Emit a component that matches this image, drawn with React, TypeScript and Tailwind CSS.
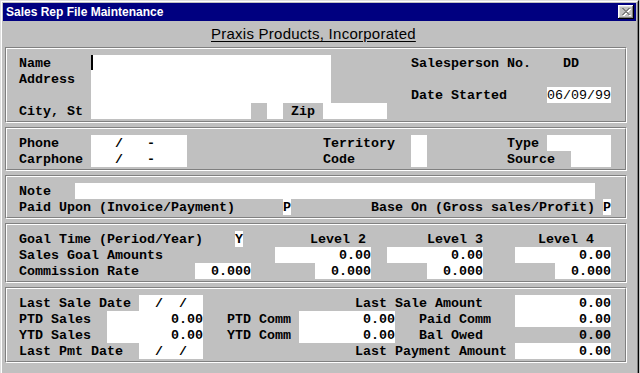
import React from "react";

type SP = { c: string; t?: string; white?: boolean; right?: boolean; normal?: boolean; children?: React.ReactNode };

function S({ c, t, white, right, normal, children }: SP) {
  return (
    <div
      className={`${c} shrink-0 h-4 leading-[18px] whitespace-pre ${white ? "bg-white" : ""} ${right ? "text-right" : ""} ${normal ? "font-normal" : ""}`}
    >
      {t}
      {children}
    </div>
  );
}

function Row({ children }: { children: React.ReactNode }) {
  return <div className="flex h-4">{children}</div>;
}

function Panel({ children, first }: { children: React.ReactNode; first?: boolean }) {
  return (
    <div
      className={`ml-[2px] w-[622px] border border-[#808080] border-r-white border-b-white ${first ? "" : "mt-[4px]"}`}
    >
      <div className="border border-white border-r-[#808080] border-b-[#808080] pl-[12px] pt-[6px] pb-[2px]">
        {children}
      </div>
    </div>
  );
}

function CloseX() {
  const px = [
    [0, 0], [1, 0], [6, 0], [7, 0],
    [1, 1], [2, 1], [5, 1], [6, 1],
    [2, 2], [3, 2], [4, 2], [5, 2],
    [3, 3], [4, 3],
    [2, 4], [3, 4], [4, 4], [5, 4],
    [1, 5], [2, 5], [5, 5], [6, 5],
    [0, 6], [1, 6], [6, 6], [7, 6],
  ];
  return (
    <svg width="9" height="8" viewBox="0 0 9 8" shapeRendering="crispEdges">
      {px.map(([x, y], i) => (
        <rect key={"w" + i} x={x + 1} y={y + 1} width="1" height="1" fill="#ffffff" />
      ))}
      {px.map(([x, y], i) => (
        <rect key={"g" + i} x={x} y={y} width="1" height="1" fill="#808080" />
      ))}
    </svg>
  );
}

export default function App() {
  return (
    <div className="w-[640px] h-[373px] bg-[#c0c0c0] overflow-hidden">
      <div className="w-[639px] h-[400px] border border-[#dfdfdf] border-r-black border-b-black">
        <div className="h-full border border-white border-r-[#808080] border-b-[#808080] p-px">
          {/* Title bar */}
          <div className="h-[18px] bg-[#000080] flex items-center pl-[3px] pr-[2px]">
            <span className="font-['Liberation_Sans',Arial,sans-serif] font-bold text-[12px] leading-[18px] text-white">
              Sales Rep File Maintenance
            </span>
            <div className="ml-auto w-[16px] h-[14px] bg-[#c0c0c0] flex items-center justify-center pl-[1px] shadow-[inset_-1px_-1px_0_#000,inset_1px_1px_0_#fff,inset_-2px_-2px_0_#808080,inset_2px_2px_0_#dfdfdf]">
              <CloseX />
            </div>
          </div>
          {/* Header */}
          <div className="h-[26px] pl-[208px]">
            <span className="font-['Liberation_Sans',Arial,sans-serif] text-[15px] tracking-[0.25px] leading-[20px] text-black underline underline-offset-[2px]">
              Praxis Products, Incorporated
            </span>
          </div>

          <div className="font-['Liberation_Mono','Courier_New',monospace] font-bold text-[13.333px] text-black">
            {/* Panel 1 */}
            <Panel first>
              <Row>
                <S c="w-[72px]" t="Name" />
                <S c="w-[240px]" white>
                  <div className="w-[2px] h-[15px] bg-black" />
                </S>
                <S c="w-[80px]" />
                <S c="w-[152px]" t="Salesperson No." />
                <S c="w-[40px]" t="DD" />
              </Row>
              <Row>
                <S c="w-[72px]" t="Address" />
                <S c="w-[240px]" white />
              </Row>
              <Row>
                <S c="w-[72px]" />
                <S c="w-[240px]" white />
                <S c="w-[80px]" />
                <S c="w-[136px]" t="Date Started" />
                <S c="w-[64px]" white normal t="06/09/99" />
              </Row>
              <Row>
                <S c="w-[72px]" t="City, St" />
                <S c="w-[160px]" white />
                <S c="w-[16px]" />
                <S c="w-[16px]" white />
                <S c="w-[40px]" t=" Zip" />
                <S c="w-[64px]" white />
              </Row>
            </Panel>

            {/* Panel 2 */}
            <Panel>
              <Row>
                <S c="w-[72px]" t="Phone" />
                <S c="w-[96px]" white t="   /   -" />
                <S c="w-[136px]" />
                <S c="w-[88px]" t="Territory" />
                <S c="w-[16px]" white />
                <S c="w-[80px]" />
                <S c="w-[40px]" t="Type" />
                <S c="w-[64px]" white />
              </Row>
              <Row>
                <S c="w-[72px]" t="Carphone" />
                <S c="w-[96px]" white t="   /   -" />
                <S c="w-[136px]" />
                <S c="w-[88px]" t="Code" />
                <S c="w-[16px]" white />
                <S c="w-[80px]" />
                <S c="w-[64px]" t="Source" />
                <S c="w-[40px]" white />
              </Row>
            </Panel>

            {/* Panel 3 */}
            <Panel>
              <Row>
                <S c="w-[56px]" t="Note" />
                <S c="w-[520px]" white />
              </Row>
              <Row>
                <S c="w-[264px]" t="Paid Upon (Invoice/Payment)" />
                <S c="w-[8px]" white t="P" />
                <S c="w-[80px]" />
                <S c="w-[232px]" t="Base On (Gross sales/Profit)" />
                <S c="w-[8px]" white t="P" />
              </Row>
            </Panel>

            {/* Panel 4 */}
            <Panel>
              <Row>
                <S c="w-[216px]" t="Goal Time (Period/Year)" />
                <S c="w-[8px]" white t="Y" />
                <S c="w-[67px]" />
                <S c="w-[117px]" t="Level 2" />
                <S c="w-[111px]" t="Level 3" />
                <S c="w-[60px]" t="Level 4" />
              </Row>
              <Row>
                <S c="w-[256px]" t="Sales Goal Amounts" />
                <S c="w-[96px]" white right t="0.00" />
                <S c="w-[16px]" />
                <S c="w-[96px]" white right t="0.00" />
                <S c="w-[32px]" />
                <S c="w-[96px]" white right t="0.00" />
              </Row>
              <Row>
                <S c="w-[176px]" t="Commission Rate" />
                <S c="w-[56px]" white right t="0.000" />
                <S c="w-[64px]" />
                <S c="w-[56px]" white right t="0.000" />
                <S c="w-[56px]" />
                <S c="w-[56px]" white right t="0.000" />
                <S c="w-[72px]" />
                <S c="w-[56px]" white right t="0.000" />
              </Row>
            </Panel>

            {/* Panel 5 */}
            <Panel>
              <Row>
                <S c="w-[120px]" t="Last Sale Date" />
                <S c="w-[64px]" white t="  /  /" />
                <S c="w-[152px]" />
                <S c="w-[160px]" t="Last Sale Amount" />
                <S c="w-[96px]" white right t="0.00" />
              </Row>
              <Row>
                <S c="w-[88px]" t="PTD Sales" />
                <S c="w-[96px]" white right t="0.00" />
                <S c="w-[24px]" />
                <S c="w-[72px]" t="PTD Comm" />
                <S c="w-[96px]" white right t="0.00" />
                <S c="w-[24px]" />
                <S c="w-[96px]" t="Paid Comm" />
                <S c="w-[96px]" white right t="0.00" />
              </Row>
              <Row>
                <S c="w-[88px]" t="YTD Sales" />
                <S c="w-[96px]" white right t="0.00" />
                <S c="w-[24px]" />
                <S c="w-[72px]" t="YTD Comm" />
                <S c="w-[96px]" white right t="0.00" />
                <S c="w-[24px]" />
                <S c="w-[96px]" t="Bal Owed" />
                <S c="w-[96px]" right t="0.00" />
              </Row>
              <Row>
                <S c="w-[120px]" t="Last Pmt Date" />
                <S c="w-[64px]" white t="  /  /" />
                <S c="w-[152px]" />
                <S c="w-[160px]" t="Last Payment Amount" />
                <S c="w-[96px]" white right t="0.00" />
              </Row>
            </Panel>
          </div>
        </div>
      </div>
    </div>
  );
}
